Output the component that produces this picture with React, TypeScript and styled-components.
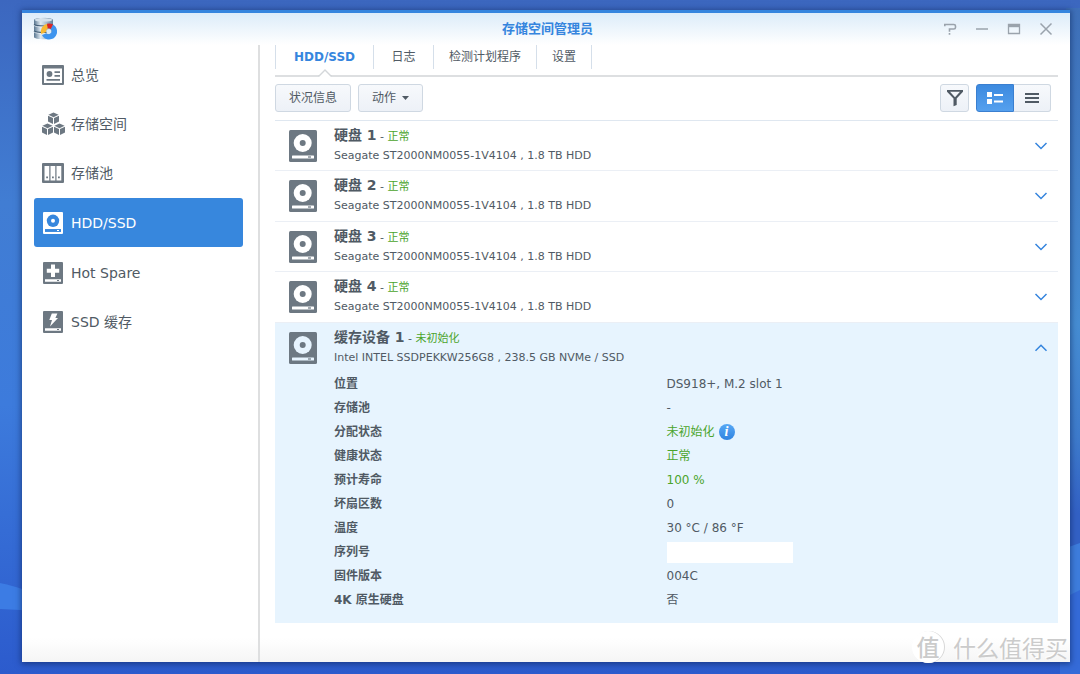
import React, { useState } from 'react';
import styled, { createGlobalStyle, css } from 'styled-components';

const GlobalStyle = createGlobalStyle`
  *, *::before, *::after { box-sizing: border-box; }
  body {
    margin: 0;
    background: #3565cb;
    color: #505a64;
    font-family: "DejaVu Sans", "Noto Sans CJK SC", sans-serif;
    font-size: 12px;
  }
  button { font: inherit; color: inherit; padding: 0; border: 0; background: none; cursor: pointer; }
`;

/* ---------- desktop and window ---------- */

const Desktop = styled.div`
  position: relative;
  display: flex;
  min-height: 100vh;
  padding: 10px 10px 12px 22px;
`;

const Wallpaper = styled.svg`
  position: absolute;
  inset: 0;
  width: 100%;
  height: 100%;
`;

const Window = styled.section`
  position: relative;
  flex: 1;
  min-width: 0;
  display: flex;
  flex-direction: column;
  border-top: 3px solid #3585de;
  background:
    linear-gradient(#dcecf9, #ffffff00) top / 100% 32px no-repeat,
    linear-gradient(#ffffff00, #f5f5f5) bottom / 100% 24px no-repeat,
    #fff;
  box-shadow: 0 1px 6px 1px rgba(10, 30, 80, 0.55);
`;

const TitleBar = styled.header`
  display: grid;
  grid-template-columns: 1fr auto 1fr;
  align-items: center;
  height: 32px;
  padding: 0 8px 0 11px;
`;

const Title = styled.h1`
  margin: 0;
  font-size: 13px;
  line-height: 20px;
  font-weight: 700;
  color: #3585de;
`;

const WindowControls = styled.div`
  display: flex;
  justify-content: flex-end;
`;

const WindowButton = styled.button`
  display: flex;
  align-items: center;
  justify-content: center;
  width: 32px;
  height: 24px;
  color: #9aa3ac;
`;

const Body = styled.div`
  flex: 1;
  display: flex;
`;

/* ---------- sidebar ---------- */

const Sidebar = styled.nav`
  flex: 0 0 238px;
  padding: 5px 15px 0 12px;
  border-right: 2px solid #dedfe0;
`;

const NavList = styled.ul`
  display: flex;
  flex-direction: column;
  margin: 0;
  padding: 0;
  list-style: none;
`;

const NavItem = styled.button<{ $active: boolean }>`
  display: flex;
  align-items: center;
  gap: 6px;
  width: 100%;
  height: 49px;
  padding: 0 8px;
  border-radius: 3px;
  font-size: 14px;
  line-height: 20px;
  text-align: left;
  ${(p) =>
    p.$active &&
    css`
      margin: 1px 0;
      background: #3787dd;
      color: #fff;
    `}
`;

const NavIcon = styled.svg<{ $active: boolean }>`
  flex: none;
  width: 23px;
  height: 24px;
  color: ${(p) => (p.$active ? '#fff' : '#6d7882')};
`;

/* ---------- main panel ---------- */

const Main = styled.main`
  flex: 1;
  min-width: 0;
  padding: 0 12px 0 15px;
`;

const Tabs = styled.div`
  display: flex;
  padding-bottom: 6px;
  border-bottom: 2px solid #dddfe1;
`;

const Tab = styled.button<{ $active: boolean }>`
  position: relative;
  min-width: 60px;
  height: 24px;
  padding: 0 15px;
  border-left: 1px solid #d5dfea;
  line-height: 24px;
  ${(p) =>
    p.$active &&
    css`
      padding: 0 18px;
      font-weight: 700;
      color: #3585de;
    `}
  &:last-child { min-width: 0; border-right: 1px solid #d5dfea; }
`;

const TabPointer = styled.svg`
  position: absolute;
  left: 50%;
  top: 24px;
  width: 14px;
  height: 8px;
  margin-left: -7px;
`;

const Toolbar = styled.div`
  display: flex;
  gap: 7px;
  padding: 7px 7px 8px 0;
  border-bottom: 1px solid #dfe7f0;
`;

const toolSurface = css`
  border: 1px solid #cfd8e2;
  background: linear-gradient(#f7f9fc, #edf1f7);
`;

const ToolButton = styled.button`
  ${toolSurface}
  display: flex;
  align-items: center;
  gap: 6px;
  height: 28px;
  padding: 0 13px;
  border-radius: 3px;
  line-height: 26px;
`;

const IconButton = styled(ToolButton)`
  justify-content: center;
  width: 29px;
  padding: 0;
  margin-left: auto;
`;

const Segmented = styled.div`
  display: flex;
`;

const Segment = styled.button<{ $active: boolean }>`
  ${toolSurface}
  display: flex;
  align-items: center;
  justify-content: center;
  width: 38px;
  height: 28px;
  &:first-child { border-radius: 3px 0 0 3px; }
  &:last-child { border-radius: 0 3px 3px 0; border-left-width: 0; width: 37px; }
  ${(p) =>
    p.$active &&
    css`
      border-color: #3a7fd0;
      background: linear-gradient(#3d8adf, #55a0ee);
      color: #fff;
    `}
`;

const DiskList = styled.ul`
  margin: 0;
  padding: 0;
  list-style: none;
`;

const DiskItem = styled.li<{ $open: boolean }>`
  border-bottom: 1px solid #ebeff5;
  &:nth-child(even) { padding-bottom: 1px; }
  ${(p) =>
    p.$open &&
    css`
      border: 0;
      padding-bottom: 11px;
      background: #e7f4fe;
    `}
`;

const DiskHeader = styled.button`
  display: flex;
  align-items: center;
  gap: 16px;
  width: 100%;
  height: 49px;
  padding: 0 9px 0 13px;
  text-align: left;
`;

const DiskText = styled.span`
  flex: 1;
  display: flex;
  flex-direction: column;
  padding-bottom: 2px;
`;

const DiskName = styled.span`
  font-size: 11px;
  line-height: 20px;
`;

const DiskTitle = styled.strong`
  font-size: 14px;
`;

const DiskModel = styled.span`
  font-size: 11px;
  line-height: 18px;
`;

const Good = styled.span`
  color: #4ba42c;
`;

const Details = styled.table`
  width: 100%;
  table-layout: fixed;
  border-collapse: collapse;
  line-height: 20px;
`;

const Label = styled.th`
  width: 50%;
  height: 24px;
  padding: 0 0 0 59px;
  text-align: left;
`;

const Value = styled.td`
  height: 24px;
  padding: 0;
`;

const ValueLine = styled.div`
  display: flex;
  align-items: center;
  gap: 4px;
`;

const Redacted = styled.div`
  width: 126px;
  height: 21px;
  background: #fff;
`;

const InfoButton = styled.button`
  width: 16px;
  height: 16px;
  border-radius: 50%;
  background: linear-gradient(#58a8f5, #2f83e0);
  color: #fff;
  font: italic 700 14px/16px "Liberation Serif", serif;
  text-align: center;
`;

const Watermark = styled.div`
  position: absolute;
  right: 12px;
  bottom: 11px;
  display: flex;
  align-items: center;
  gap: 9px;
  color: #cbcbcb;
  font-family: "Noto Sans CJK SC", sans-serif;
  font-size: 23px;
  line-height: 30px;
  text-shadow: -1px -1px 0 #fff;
`;

const Seal = styled.span`
  width: 32px;
  height: 32px;
  border-radius: 50%;
  background: #fff;
  box-shadow: 1px 0 0 #d8d8d8;
  font-weight: 500;
  line-height: 30px;
  text-align: center;
`;

/* ---------- drawings ---------- */

const AppLogo = () => (
  <svg width="24" height="24" viewBox="0 0 24 24" aria-hidden="true">
    <defs>
      <linearGradient id="metal" x1="0" x2="1">
        <stop offset="0" stopColor="#587690" />
        <stop offset=".35" stopColor="#dfeaf2" />
        <stop offset=".65" stopColor="#a7bccd" />
        <stop offset="1" stopColor="#617f99" />
      </linearGradient>
    </defs>
    <path d="M1 3c0-3 19-3 19 0v17c0 3-19 3-19 0z" fill="url(#metal)" />
    <ellipse cx="10.5" cy="3" rx="9" ry="1.6" fill="#d5e2eb" />
    <path d="M1 7.5c2 2 17 2 19 0M1 14c2 2 17 2 19 0" fill="none" stroke="#3f5b74" strokeWidth="1.1" />
    <path d="M1 8.500c2 2 17 2 19 0M1 15c2 2 17 2 19 0" fill="none" stroke="#eef5fa" strokeWidth=".7" />
    <circle cx="16" cy="14.500" r="2.600" fill="#dbe9f4" />
    <path d="M19.800 7.400A8 8 0 1 1 9 18.200l4.300-2a3 3 0 1 0 4.400-4.200z" fill="#3d94ee" />
    <path d="M8.200 17A8 8 0 0 1 14.300 6.700l.5 5a3 3 0 0 0-1.800 3.200z" fill="#f8b932" />
    <path d="M14 6.700a8 8 0 0 1 6 .7l-2.300 4.600a3 3 0 0 0-3-.4z" fill="#da2525" />
  </svg>
);

const Cube = ({ x, y }: { x: number; y: number }) => (
  <g transform={`translate(${x} ${y})`}>
    <path d="M5.500 0 10.600 2.300 5.500 4.700.4 2.300z" />
    <path d="M0 3.300 5 5.600v5.900L0 9zM11 3.300 6 5.600v5.900L11 9z" />
  </g>
);

const DriveFrame = ({ children }: { children: React.ReactNode }) => (
  <>
    <path
      fillRule="evenodd"
      d="M2 1h18a1 1 0 0 1 1 1v20a1 1 0 0 1-1 1H2a1 1 0 0 1-1-1V2a1 1 0 0 1 1-1zm1 17.200v2.600h16v-2.600zm12 .9h2v.9h-2z"
    />
    {children}
  </>
);

const navDrawings: Record<string, (hole: string) => React.ReactNode> = {
  overview: () => (
    <>
      <path fillRule="evenodd" d="M1 2h20a1 1 0 0 1 1 1v18a1 1 0 0 1-1 1H1a1 1 0 0 1-1-1V3a1 1 0 0 1 1-1zm1 3.600V20h18V5.600z" />
      <circle cx="7.500" cy="11" r="2.900" />
      <path d="M12.500 8.200h5.500v1.700h-5.500zM12.500 12h5.500v1.700h-5.500zM4.500 16h13.500v1.700H4.500z" />
    </>
  ),
  volume: () => (
    <>
      <Cube x={6} y={0.5} />
      <Cube x={0} y={11.5} />
      <Cube x={12} y={11.5} />
    </>
  ),
  pool: () => (
    <>
      <path fillRule="evenodd" d="M1 2h20a1 1 0 0 1 1 1v18a1 1 0 0 1-1 1H1a1 1 0 0 1-1-1V3a1 1 0 0 1 1-1zm1.500 3v14.500h4.800V5zm6 0v14.500h4.800V5zm6 0v14.500h4.800V5z" />
      <path d="M4.200 15.500h1.800v1.800H4.200zM10 15.500h1.800v1.800H10zM16 15.500h1.800v1.800H16z" />
    </>
  ),
  disk: (hole) => (
    <DriveFrame>
      <circle cx="11" cy="9.800" r="6.200" fill={hole} />
      <circle cx="11" cy="9.800" r="2" />
      <path d="M3 18.200h16v2.600H3z" fill={hole} />
      <path d="M15 19h2v1h-2z" />
    </DriveFrame>
  ),
  spare: (hole) => (
    <DriveFrame>
      <path d="M9 3.600h4v4.200h4.200v4H13V16H9v-4.200H4.800v-4H9z" fill={hole} />
    </DriveFrame>
  ),
  cache: (hole) => (
    <DriveFrame>
      <path d="M9.800 3.600h5.600l-2 4.400H16l-8 8.500 2-6.500H7.300z" fill={hole} />
    </DriveFrame>
  ),
};

const DiskIcon = ({ hole }: { hole: string }) => (
  <svg width="30" height="34" viewBox="0 0 30 34" aria-hidden="true">
    <rect x="1" y="1" width="28" height="32" rx="1.500" fill="#6d7882" />
    <circle cx="14.700" cy="14" r="9" fill={hole} />
    <circle cx="14.700" cy="14" r="3" fill="#6d7882" />
    <rect x="4" y="26.500" width="22" height="3" rx=".5" fill={hole} />
    <rect x="20" y="27.400" width="3" height="1.200" fill="#6d7882" />
  </svg>
);

const Chevron = ({ up }: { up: boolean }) => (
  <svg width="16" height="16" viewBox="0 0 16 16" fill="none" stroke="#3585de" strokeWidth="1.500" aria-hidden="true">
    <path d={up ? 'M2.500 10.800 8 5.300l5.500 5.500' : 'M2.500 5 8 10.500l5.500-5.500'} />
  </svg>
);

/* ---------- data ---------- */

const navItems = [
  { id: 'overview', label: '总览' },
  { id: 'volume', label: '存储空间' },
  { id: 'pool', label: '存储池' },
  { id: 'disk', label: 'HDD/SSD' },
  { id: 'spare', label: 'Hot Spare' },
  { id: 'cache', label: 'SSD 缓存' },
];

const tabs = ['HDD/SSD', '日志', '检测计划程序', '设置'];

const seagate = 'Seagate ST2000NM0055-1V4104 , 1.8 TB HDD';
const disks = [
  { name: '硬盘 1', status: '正常', model: seagate },
  { name: '硬盘 2', status: '正常', model: seagate },
  { name: '硬盘 3', status: '正常', model: seagate },
  { name: '硬盘 4', status: '正常', model: seagate },
  { name: '缓存设备 1', status: '未初始化', model: 'Intel INTEL SSDPEKKW256G8 , 238.5 GB NVMe / SSD' },
];

const details: { label: string; value: React.ReactNode }[] = [
  { label: '位置', value: 'DS918+, M.2 slot 1' },
  { label: '存储池', value: '-' },
  {
    label: '分配状态',
    value: (
      <ValueLine>
        <Good>未初始化</Good>
        <InfoButton aria-label="说明">i</InfoButton>
      </ValueLine>
    ),
  },
  { label: '健康状态', value: <Good>正常</Good> },
  { label: '预计寿命', value: <Good>100 %</Good> },
  { label: '坏扇区数', value: '0' },
  { label: '温度', value: '30 °C / 86 °F' },
  { label: '序列号', value: <Redacted /> },
  { label: '固件版本', value: '004C' },
  { label: '4K 原生硬盘', value: '否' },
];

export default function App() {
  const [page, setPage] = useState('disk');
  const [tab, setTab] = useState(tabs[0]);
  const [view, setView] = useState('detail');
  const [open, setOpen] = useState('缓存设备 1');

  return (
    <Desktop>
      <GlobalStyle />
      <Wallpaper viewBox="0 0 1080 674" preserveAspectRatio="none" aria-hidden="true">
        <defs>
          <linearGradient id="sky" x2="0" y2="1">
            <stop offset="0" stopColor="#3c67bf" />
            <stop offset=".3" stopColor="#417dd3" />
            <stop offset=".6" stopColor="#3d7bdc" />
            <stop offset="1" stopColor="#2c5bcd" />
          </linearGradient>
          <linearGradient id="edge" x2="0" y2="1">
            <stop offset="0" stopColor="#3f70b9" />
            <stop offset=".5" stopColor="#468dd3" />
            <stop offset=".68" stopColor="#3e7bcc" />
            <stop offset=".8" stopColor="#3361c5" />
          </linearGradient>
        </defs>
        <path d="M0 0h1080v674H0z" fill="url(#sky)" />
        <path d="M1066 8h14v632h-14z" fill="url(#edge)" />
        <path d="M0 583q12 2 40 12v16L0 609z" fill="#3c7ce4" />
        <path d="M1060 550l20-7v60l-20 50z" fill="#3e7ddd" />
        <path d="M1060 600l20-10v84h-20z" fill="#356bd8" />
      </Wallpaper>

      <Window>
        <TitleBar>
          <AppLogo />
          <Title>存储空间管理员</Title>
          <WindowControls>
            <WindowButton aria-label="帮助">
              <svg width="14" height="14" viewBox="0 0 14 14" fill="none" stroke="currentColor" strokeWidth="1.600">
                <path d="M1.800 4.200V2.500h9q1.700 0 1.700 1.500v1.500q0 1.500-1.700 1.500H6.500v2.700M6.500 11v1.800" />
              </svg>
            </WindowButton>
            <WindowButton aria-label="最小化">
              <svg width="14" height="14" viewBox="0 0 14 14" stroke="currentColor" strokeWidth="1.500">
                <path d="M1 7h12" />
              </svg>
            </WindowButton>
            <WindowButton aria-label="最大化">
              <svg width="14" height="14" viewBox="0 0 14 14" fill="none" stroke="currentColor">
                <path d="M1.500 2.500h11v9h-11z" strokeWidth="1.300" />
                <path d="M2 4h10" strokeWidth="2.400" />
              </svg>
            </WindowButton>
            <WindowButton aria-label="关闭">
              <svg width="14" height="14" viewBox="0 0 14 14" stroke="currentColor" strokeWidth="1.500">
                <path d="M1.500 1.500l11 11M12.500 1.500l-11 11" />
              </svg>
            </WindowButton>
          </WindowControls>
        </TitleBar>

        <Body>
          <Sidebar>
            <NavList>
              {navItems.map(({ id, label }) => {
                const active = id === page;
                return (
                  <li key={id}>
                    <NavItem $active={active} onClick={() => setPage(id)}>
                      <NavIcon $active={active} viewBox="0 0 23 24" fill="currentColor" aria-hidden="true">
                        {navDrawings[id](active ? '#3787dd' : '#fff')}
                      </NavIcon>
                      {label}
                    </NavItem>
                  </li>
                );
              })}
            </NavList>
          </Sidebar>

          <Main>
            <Tabs role="tablist">
              {tabs.map((name) => (
                <Tab key={name} role="tab" aria-selected={name === tab} $active={name === tab} onClick={() => setTab(name)}>
                  {name}
                  {name === tab && (
                    <TabPointer viewBox="0 0 14 8" aria-hidden="true">
                      <path d="M0 8 7 1l7 7z" fill="#fff" />
                      <path d="M0 7h1l6-6 6 6h1" fill="none" stroke="#d4d7da" strokeWidth="1.400" />
                    </TabPointer>
                  )}
                </Tab>
              ))}
            </Tabs>

            <Toolbar>
              <ToolButton>状况信息</ToolButton>
              <ToolButton>
                动作
                <svg width="7" height="4" viewBox="0 0 7 4" aria-hidden="true">
                  <path d="M0 0h7L3.500 4z" fill="#505a64" />
                </svg>
              </ToolButton>
              <IconButton aria-label="筛选">
                <svg width="16" height="18" viewBox="0 0 16 18" aria-hidden="true">
                  <path
                    fillRule="evenodd"
                    d="M0 1h16v1.800L9.700 9.400V16L6.500 17.200V9.400L0 2.800zm3 1.800 5 5.400 5-5.400z"
                    fill="#505a64"
                  />
                </svg>
              </IconButton>
              <Segmented>
                <Segment aria-label="详细视图" $active={view === 'detail'} onClick={() => setView('detail')}>
                  <svg width="18" height="14" viewBox="0 0 18 14" fill="currentColor" aria-hidden="true">
                    <path d="M1 1h5v5H1zM1 8h5v5H1zM8 3h9v2H8zM8 9.500h9v2H8z" />
                  </svg>
                </Segment>
                <Segment aria-label="列表视图" $active={view === 'list'} onClick={() => setView('list')}>
                  <svg width="14" height="12" viewBox="0 0 14 12" fill="currentColor" aria-hidden="true">
                    <path d="M0 1h14v2H0zM0 5h14v2H0zM0 9h14v2H0z" />
                  </svg>
                </Segment>
              </Segmented>
            </Toolbar>

            <DiskList>
              {disks.map(({ name, status, model }) => {
                const expanded = name === open;
                return (
                  <DiskItem key={name} $open={expanded}>
                    <DiskHeader aria-expanded={expanded} onClick={() => setOpen(expanded ? '' : name)}>
                      <DiskIcon hole={expanded ? '#e7f4fe' : '#fff'} />
                      <DiskText>
                        <DiskName>
                          <DiskTitle>{name}</DiskTitle> - <Good>{status}</Good>
                        </DiskName>
                        <DiskModel>{model}</DiskModel>
                      </DiskText>
                      <Chevron up={expanded} />
                    </DiskHeader>
                    {expanded && (
                      <Details>
                        <tbody>
                          {details.map(({ label, value }) => (
                            <tr key={label}>
                              <Label scope="row">{label}</Label>
                              <Value>{value}</Value>
                            </tr>
                          ))}
                        </tbody>
                      </Details>
                    )}
                  </DiskItem>
                );
              })}
            </DiskList>
          </Main>
        </Body>
      </Window>

      <Watermark>
        <Seal>值</Seal>
        <span>什么值得买</span>
      </Watermark>
    </Desktop>
  );
}
